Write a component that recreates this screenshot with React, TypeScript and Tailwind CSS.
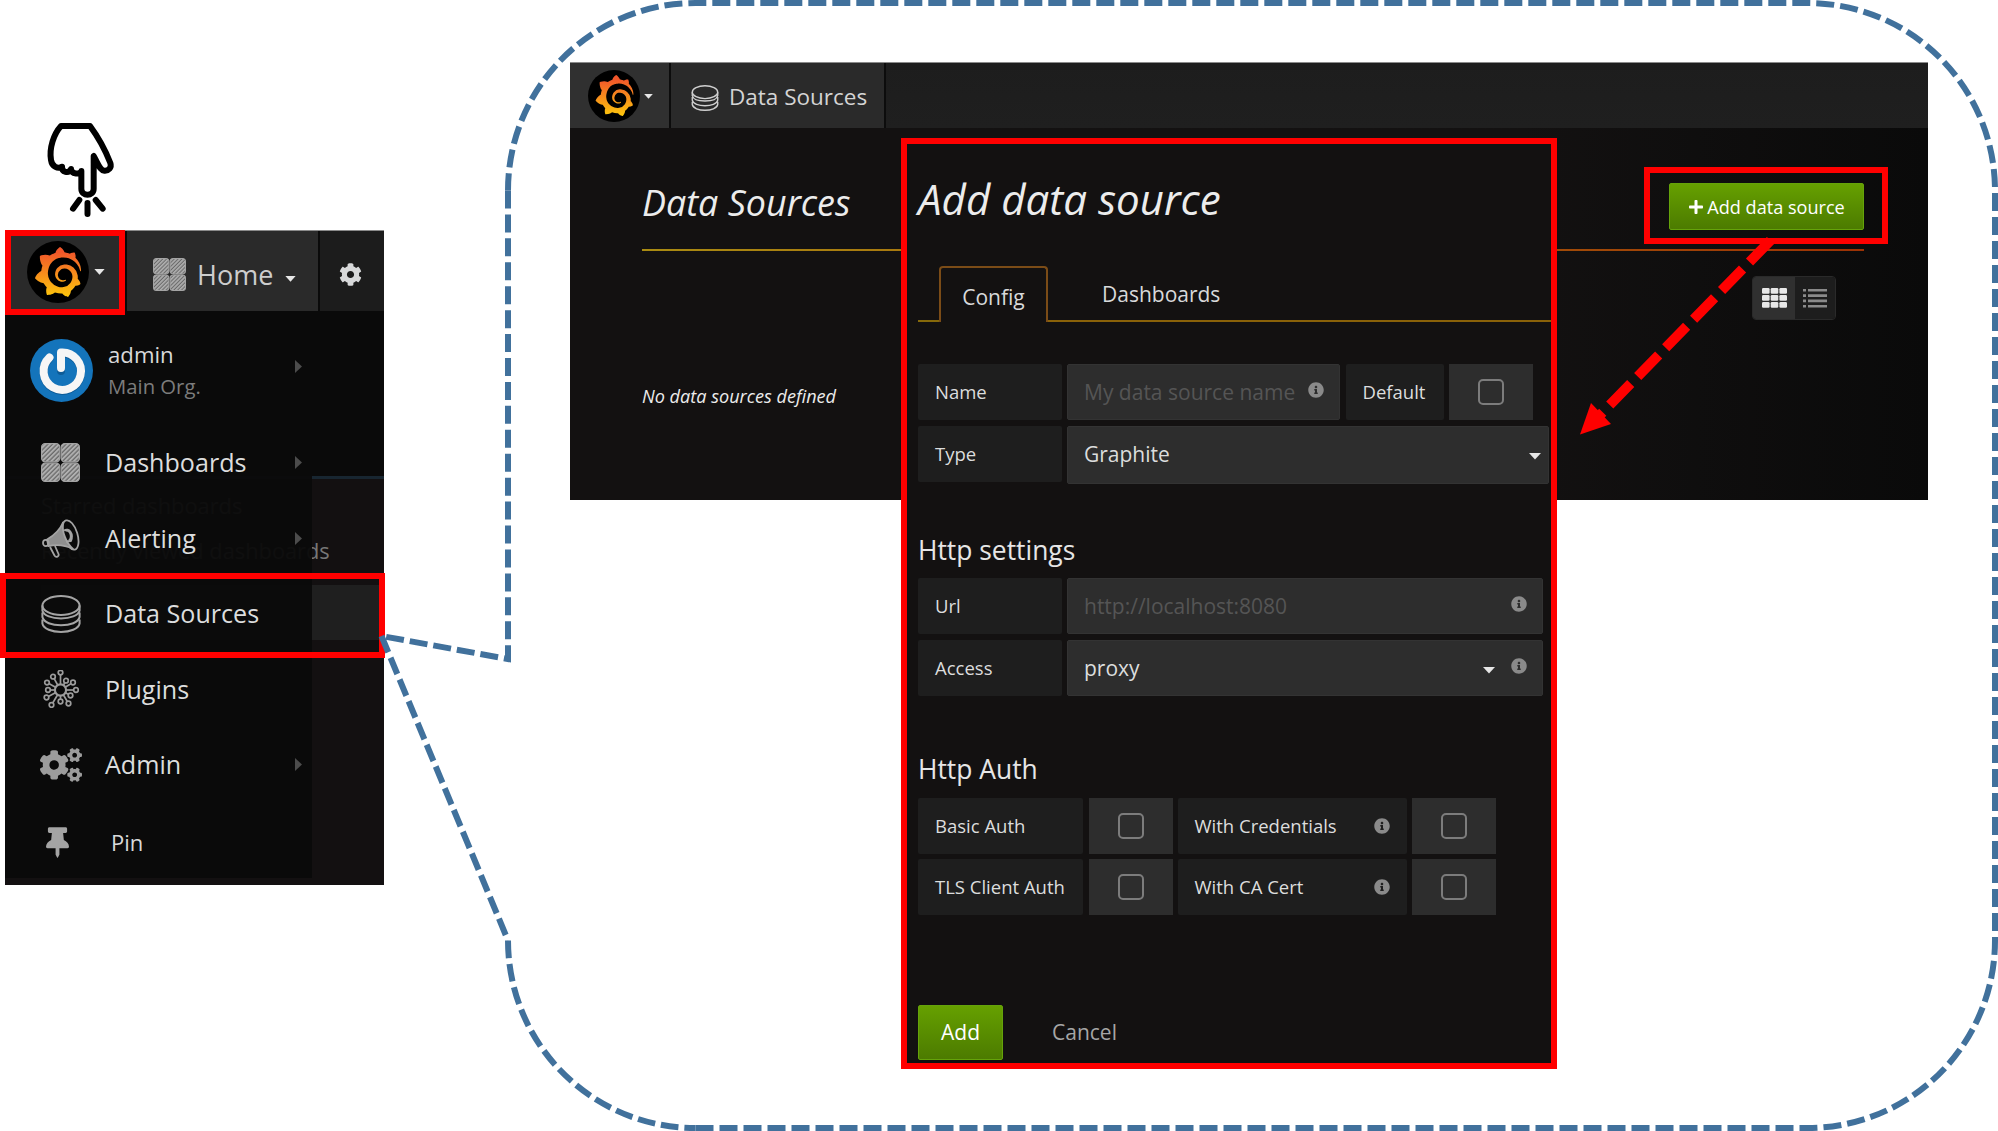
import React from "react";
import { FaCog, FaCogs, FaInfoCircle, FaPlus, FaThumbtack } from "react-icons/fa";
import { SiGrafana } from "react-icons/si";

function GrafanaLogo({ box, icon }: { box: string; icon: string }) {
  return (
    <div className={`flex shrink-0 items-center justify-center rounded-full bg-black ${box}`}>
      <SiGrafana className={icon} fill="url(#grafana-fill)" stroke="none" />
    </div>
  );
}

function Caret({ className = "h-[7px] w-[12px]" }: { className?: string }) {
  return (
    <svg viewBox="0 0 12 7" className={`shrink-0 ${className}`} fill="#e6e6e6">
      <path d="M0 0H12L6 6.6Z" />
    </svg>
  );
}

function TilesIcon({ className }: { className: string }) {
  return (
    <svg viewBox="0 0 39 39" className={className}>
      {[0, 19.6].map((x) =>
        [0, 19.6].map((y) => (
          <rect key={`${x}-${y}`} x={x + 0.6} y={y + 0.6} width="18.2" height="18.2" rx="3.6" fill="url(#hatch)" stroke="#a4a4a4" strokeWidth="1.2" />
        )),
      )}
    </svg>
  );
}

function DatabaseIcon({ className }: { className: string }) {
  return (
    <svg viewBox="0 0 40 38" className={className} fill="none" stroke="currentColor" strokeWidth="2">
      <ellipse cx="20" cy="10.5" rx="18.6" ry="9.4" />
      <path d="M1.4 10.5V15.5C2.5 20.8 11 23.4 20 23.4S37.5 20.8 38.6 15.5V10.5" />
      <path d="M1.4 17.5V22C2.5 27.5 11 30.3 20 30.3S37.5 27.5 38.6 22V17.5" />
      <path d="M1.4 24.5V28.5C2.5 34 11 36.9 20 36.9S37.5 34 38.6 28.5V24.5" />
    </svg>
  );
}

function MegaphoneIcon({ className }: { className: string }) {
  return (
    <svg viewBox="0 0 38 39" className={className} fill="none" stroke="#a4a4a4" strokeWidth="1.8" strokeLinejoin="round">
      <ellipse cx="28.5" cy="16" rx="7" ry="15.2" transform="rotate(-17 28.5 16)" />
      <path d="M21 3.5C18.5 9.5 12 16.500 5 20.500L6.500 27C14 25.500 24 26.500 31 30C24 24 19.500 12 21 3.500Z" fill="#8f8f8f" />
      <ellipse cx="3.800" cy="24" rx="2.800" ry="3.200" />
      <path d="M8 28L12.500 36.500C14 39 17.500 37.500 16.500 35L13 27" />
      <path d="M23.500 12C28 10 30.500 18 27 21.500M22 11.500C27 8 32 15 29 22L24 22.500" />
    </svg>
  );
}

const nodes = [
  [18.5, 2.6], [11, 6.7], [5, 12.6], [6, 20], [4.5, 27.5], [9.5, 35], [18.5, 31.5],
  [26.5, 33.5], [28.5, 25.5], [34, 20], [31, 12.5], [24, 10.7],
];

function PluginsIcon({ className }: { className: string }) {
  return (
    <svg viewBox="0 0 37 38" className={className} fill="#0a0a0a" stroke="#9c9c9c" strokeWidth="1.7">
      {nodes.map(([x, y]) => (
        <g key={`${x}-${y}`}>
          <path d={`M18.500 20L${x} ${y}`} />
          <circle cx={x} cy={y} r="2.3" />
        </g>
      ))}
      <circle cx="18.5" cy="20" r="5.6" strokeWidth="2.2" />
    </svg>
  );
}

function HandIcon() {
  return (
    <svg viewBox="140 36 206 288" className="absolute left-[46.400px] top-[122px] h-[96px] w-[68.700px]" fill="none" stroke="#000" strokeWidth="18" strokeLinecap="round" strokeLinejoin="round">
      <path d="M185 48H272C300 86 321 128 333 159C338 173 327 183 315 182C301 181 297 162 283 138V236C283 260 246 260 246 236V183C243 194 216 194 215 177C208 192 187 187 188 170C176 177 158 171 155 150C149 115 163 72 185 48Z" />
      <path d="M240 270L221 296M264.500 279V312M289 270L310 296" />
    </svg>
  );
}

function AvatarIcon() {
  return (
    <svg viewBox="0 0 63 63" className="h-[63px] w-[63px] shrink-0">
      <circle cx="31.5" cy="31.5" r="31.5" fill="#1474bb" />
      <path d="M19.500 18.500A18.700 18.700 0 1 0 31 13.500V31" fill="none" stroke="#0d5c98" strokeWidth="8" strokeLinecap="round" strokeLinejoin="round" transform="translate(0 1)" />
      <path d="M19.500 18.500A18.700 18.700 0 1 0 31 13.500V29" fill="none" stroke="#f6f6f6" strokeWidth="8" strokeLinecap="round" strokeLinejoin="round" />
    </svg>
  );
}

function MenuItem({ icon, label, arrow }: { icon: React.ReactNode; label: string; arrow?: boolean }) {
  return (
    <div className="flex h-[75.5px] items-center text-[25.1px] leading-none text-[#dcdddd]">
      <div className="flex w-[100px] shrink-0 items-center justify-center pl-[11px]">{icon}</div>
      <span className="grow whitespace-nowrap">{label}</span>
      {arrow && <RightArrow />}
    </div>
  );
}

function RightArrow({ className = "" }: { className?: string }) {
  return (
    <svg viewBox="0 0 7 13" className={`mr-[10px] h-[13px] w-[7px] shrink-0 ${className}`} fill="#4c4c4c">
      <path d="M0 0L7 6.500L0 13Z" />
    </svg>
  );
}

function SideMenu() {
  return (
    <div className="relative ml-[5px] mt-[230px] h-[655px] w-[379px] shrink-0 overflow-hidden bg-[#0a0a0a]">
      <div className="absolute inset-x-0 top-[81px] bottom-0">
        <div className="h-[168px] border-b-[3px] border-[#182631] bg-[#0a0a0a]" />
        <div className="h-[406px] bg-[#131011] pl-[36px] text-[21.8px] text-[#777]">
          <div className="pt-[13px] leading-[28px]">Starred dashboards</div>
          <div className="pt-[17px] leading-[28px] whitespace-nowrap">Recently viewed dashboards</div>
          <div className="mt-[20px] h-[55px] bg-[#1f1f1f]" />
        </div>
      </div>
      <div className="relative flex h-[81px] border-t border-[#8a8a8a] bg-[#1c1c1c]">
        <div className="flex w-[122px] items-center border-r-2 border-[#0a0a0a] bg-[#2a2a2a] pt-[2px] pl-[22px]">
          <GrafanaLogo box="h-[62px] w-[62px]" icon="h-[50px] w-[50px]" />
          <Caret className="ml-[5px] h-[6px] w-[11px]" />
        </div>
        <div className="flex w-[193px] items-center border-r-2 border-[#0a0a0a] bg-[#2a2a2a] pt-[6px] pl-[26px] text-[#cdcdcd]">
          <TilesIcon className="h-[33px] w-[33px] shrink-0" />
          <span className="ml-[11px] pt-[1px] text-[27px] leading-none">Home</span>
          <Caret className="ml-[12px] mt-[9px] h-[6px] w-[11px]" />
        </div>
        <div className="flex grow items-center justify-center pt-[6px] pr-[3px]">
          <FaCog className="h-[23px] w-[23px] text-[#d8d9da]" />
        </div>
      </div>
      <div className="relative h-[567px] w-[307px] bg-[#0a0a0a]/96">
        <div className="flex h-[114px] items-center pl-[25px] pt-[5px]">
          <AvatarIcon />
          <div className="ml-[15px] grow leading-[30.500px]">
            <div className="text-[22.2px] text-[#d8d9da]">admin</div>
            <div className="text-[20.3px] text-[#7c7c7c]">Main Org.</div>
          </div>
          <RightArrow className="mb-[9px]" />
        </div>
        <MenuItem icon={<TilesIcon className="h-[39px] w-[39px]" />} label="Dashboards" arrow />
        <MenuItem icon={<MegaphoneIcon className="h-[39px] w-[38px]" />} label="Alerting" arrow />
        <MenuItem icon={<DatabaseIcon className="h-[38px] w-[40px] text-[#a4a4a4]" />} label="Data Sources" />
        <MenuItem icon={<PluginsIcon className="h-[38px] w-[37px]" />} label="Plugins" />
        <MenuItem icon={<FaCogs className="h-[42px] w-[42px] text-[#9c9c9c]" />} label="Admin" arrow />
        <div className="flex h-[75px] items-center pt-[4px] text-[22px] leading-none text-[#d8d9da]">
          <FaThumbtack className="ml-[41px] h-[31px] w-[23px] text-[#a4a4a4]" />
          <span className="ml-[42px]">Pin</span>
        </div>
      </div>
    </div>
  );
}

function DataSourcesPage() {
  return (
    <div className="ml-[186px] mt-[62px] h-[438px] w-[1358px] shrink-0 bg-gradient-to-r from-[#131111] from-70% to-[#0a0a0a]">
      <div className="flex h-[66px] border-t border-[#8a8a8a] bg-gradient-to-b from-[#1d1d1d] to-[#1f1f1f]">
        <div className="flex w-[101px] items-center border-r-2 border-[#0c0c0c] bg-[#303030] pl-[18px]">
          <GrafanaLogo box="h-[52px] w-[52px]" icon="h-[41px] w-[41px]" />
          <Caret className="ml-[4px] mt-[2px] h-[5px] w-[9px]" />
        </div>
        <div className="flex w-[215px] items-center border-r-2 border-[#0c0c0c] bg-[#2a2a2a] pl-[20px] pt-[4px]">
          <DatabaseIcon className="h-[26px] w-[28px] shrink-0 text-[#d0d0d0]" />
          <span className="ml-[10px] whitespace-nowrap text-[22.5px] leading-none text-[#d4d4d4]">Data Sources</span>
        </div>
      </div>
      <div className="ml-[72px] w-[1222px] text-[#ececec]">
        <div className="flex h-[121px] justify-between">
          <h1 className="pt-[51px] text-[35.900px] leading-[48px] italic">Data Sources</h1>
          <button className="mt-[55px] flex h-[47px] w-[195px] items-center justify-center rounded-[2px] border border-[#65a30a] bg-gradient-to-b from-[#66a000] to-[#4c7b00] pt-[2px] text-[18.1px] text-white">
            <FaPlus className="mr-[3px] mb-[2px] h-[16px] w-[16px]" />
            Add data source
          </button>
        </div>
        <div className="h-[2px] bg-gradient-to-r from-[#a98b12] to-[#9c3205]" />
        <div className="mt-[25px] mr-[28px] ml-auto flex h-[44px] w-[84px] overflow-hidden rounded-[4px] border border-[#2a2a2a]">
          <div className="flex w-[42px] items-center justify-center bg-[#303030]">
            <svg viewBox="0 0 25 20" className="h-[20px] w-[25px]" fill="#e8e8e8">
              {[0, 8.7, 17.4].map((x) => [0, 7, 14].map((y) => <rect key={`${x}-${y}`} x={x} y={y} width="7.6" height="5.8" rx="1.2" />))}
            </svg>
          </div>
          <div className="flex grow items-center justify-center bg-[#1d1d1d]">
            <svg viewBox="0 0 24 19" className="h-[19px] w-[24px]" fill="#8a8a8a">
              {[0, 5.3, 10.6, 15.9].map((y) => (
                <path key={y} d={`M0 ${y}h3v2.600h-3zM5 ${y}h19v2.600h-19z`} />
              ))}
            </svg>
          </div>
        </div>
        <p className="mt-[64px] text-[18.1px] leading-[24px] italic">No data sources defined</p>
      </div>
    </div>
  );
}

function Label({ width, children, info }: { width: string; children: React.ReactNode; info?: boolean }) {
  return (
    <div className={`flex h-[56px] shrink-0 items-center justify-between rounded-[2px] bg-[#1e1e1e] pr-[17px] pl-[17px] text-[18.5px] whitespace-nowrap text-[#dcdddd] ${width}`}>
      {children}
      {info && <FaInfoCircle className="mb-[1px] h-[16px] w-[16px] shrink-0 text-[#8a8a8a]" />}
    </div>
  );
}

function Check() {
  return (
    <div className="flex h-[56px] w-[84.500px] shrink-0 items-center justify-center bg-[#2d2d2d]">
      <div className="h-[26px] w-[26px] rounded-[5px] border-2 border-[#7c7c7c]" />
    </div>
  );
}

function Field({ className, children }: { className: string; children: React.ReactNode }) {
  return (
    <div className={`ml-[5px] flex shrink-0 items-center rounded-[2px] border border-[#333] bg-[#2d2d2d] pl-[16px] text-[21px] whitespace-nowrap ${className}`}>
      {children}
    </div>
  );
}

function AddDataSource() {
  return (
    <div className="absolute top-[138px] left-[901px] h-[931px] w-[656px] border-[6px] border-[#ff0000] bg-[#131111] pl-[11px]">
      <h2 className="pt-[26px] text-[42.100px] leading-[58px] italic text-[#ececec]">Add data source</h2>
      <div className="mt-[38px] flex h-[56px] text-[21px] text-[#d8d9da]">
        <div className="w-[21px] border-b-2 border-[#86690a]" />
        <div className="flex w-[109px] items-center justify-center rounded-t-[4px] border-2 border-b-0 border-[#7b4c17] pt-[5px]">Config</div>
        <div className="flex grow items-center border-b-2 border-[#8a6209] pl-[54px] pt-[3px]">Dashboards</div>
      </div>

      <div className="mt-[42px] flex">
        <Label width="w-[144px]">Name</Label>
        <Field className="h-[56px] w-[273px] justify-between pr-[15px] text-[#555]">
          <span className="pt-[2px]">My data source name</span>
          <FaInfoCircle className="mb-[5px] h-[16px] w-[16px] text-[#8a8a8a]" />
        </Field>
        <div className="ml-[5.500px] flex gap-[5px]">
          <Label width="w-[98px]">Default</Label>
          <Check />
        </div>
      </div>
      <div className="mt-[6px] flex">
        <Label width="w-[144px]">Type</Label>
        <Field className="h-[58px] w-[482px] justify-between pr-[7px] text-[#dcdddd]">
          <span>Graphite</span>
          <Caret className="mt-[2px] h-[7px] w-[12px]" />
        </Field>
      </div>

      <h3 className="mt-[46px] h-[48px] text-[26.400px] leading-[40px] text-[#e6e6e6]">Http settings</h3>
      <div className="flex">
        <Label width="w-[144px]">Url</Label>
        <Field className="h-[56px] w-[476px] justify-between pr-[15px] text-[#555]">
          <span className="pt-[2px]">http://localhost:8080</span>
          <FaInfoCircle className="mb-[4px] h-[16px] w-[16px] text-[#8a8a8a]" />
        </Field>
      </div>
      <div className="mt-[6px] flex">
        <Label width="w-[144px]">Access</Label>
        <Field className="h-[56px] w-[476px] pr-[15px] text-[#dcdddd]">
          <span className="grow pt-[2px]">proxy</span>
          <Caret className="mt-[4px] mr-[16px] h-[7px] w-[12px]" />
          <FaInfoCircle className="mb-[5px] h-[16px] w-[16px] text-[#8a8a8a]" />
        </Field>
      </div>

      <h3 className="mt-[53px] h-[49px] text-[26.400px] leading-[40px] text-[#e6e6e6]">Http Auth</h3>
      <div className="grid grid-cols-[170.500px_89px_234px_84px] gap-y-[5px]">
        <Label width="w-[165px]">Basic Auth</Label>
        <Check />
        <Label width="w-[229px]" info>With Credentials</Label>
        <Check />
        <Label width="w-[165px]">TLS Client Auth</Label>
        <Check />
        <Label width="w-[229px]" info>With CA Cert</Label>
        <Check />
      </div>

      <div className="mt-[90px] flex items-center text-[21px]">
        <button className="h-[55px] w-[85px] rounded-[2px] border border-[#65a30a] bg-gradient-to-b from-[#66a000] to-[#4c7b00] text-white">Add</button>
        <span className="ml-[49px] text-[#a6a6a6]">Cancel</span>
      </div>
    </div>
  );
}

function Annotations() {
  return (
    <>
      <div className="absolute top-[230px] left-[5px] h-[85px] w-[120px] border-[6px] border-[#ff0000]" />
      <div className="absolute top-[573px] left-0 h-[85px] w-[385px] border-[6px] border-[#ff0000]" />
      <div className="absolute top-[167px] left-[1644px] h-[77px] w-[244px] border-[6px] border-[#ff0000]" />
      <HandIcon />
      <svg viewBox="0 0 1998 1131" className="pointer-events-none absolute top-0 left-0 h-[1131px] w-[1998px]" fill="none">
        <g stroke="#41719c" strokeWidth="6">
          <path d="M381.500 636L508 940.500" strokeDasharray="17.600 5.950" />
          <path d="M508 940.500A187.500 187.500 0 0 0 695.500 1128" strokeDasharray="17.700 5.900" />
          <path
            d="M695.500 1128H1807.500A187.500 187.500 0 0 0 1995 940.500V190.500A187.500 187.500 0 0 0 1807.500 3H695.500A187.500 187.500 0 0 0 508 190.500"
            strokeDasharray="18 6"
          />
          <path d="M508 190.500V659L381.500 636" strokeDasharray="18 5.930" />
        </g>
        <path d="M1770.500 240.500L1598 417" stroke="#f00" strokeWidth="10" strokeDasharray="30 10" />
        <path d="M1580 434.500L1591 403L1611 424Z" fill="#f00" />
      </svg>
    </>
  );
}

export default function App() {
  return (
    <div className="relative flex h-[1131px] w-[1998px] items-start overflow-hidden bg-white font-['Open_Sans','Noto_Sans',sans-serif]">
      <svg className="absolute h-0 w-0">
        <defs>
          <linearGradient id="grafana-fill" x1="0" y1="0" x2="0" y2="1">
            <stop offset="0.1" stopColor="#f1562a" />
            <stop offset="1" stopColor="#fdc70c" />
          </linearGradient>
          <pattern id="hatch" width="3.2" height="3.2" patternUnits="userSpaceOnUse" patternTransform="rotate(45)">
            <rect width="3.2" height="3.2" fill="#6a6a6a" />
            <rect width="1.9" height="3.2" fill="#b0b0b0" />
          </pattern>
        </defs>
      </svg>
      <SideMenu />
      <DataSourcesPage />
      <AddDataSource />
      <Annotations />
    </div>
  );
}
